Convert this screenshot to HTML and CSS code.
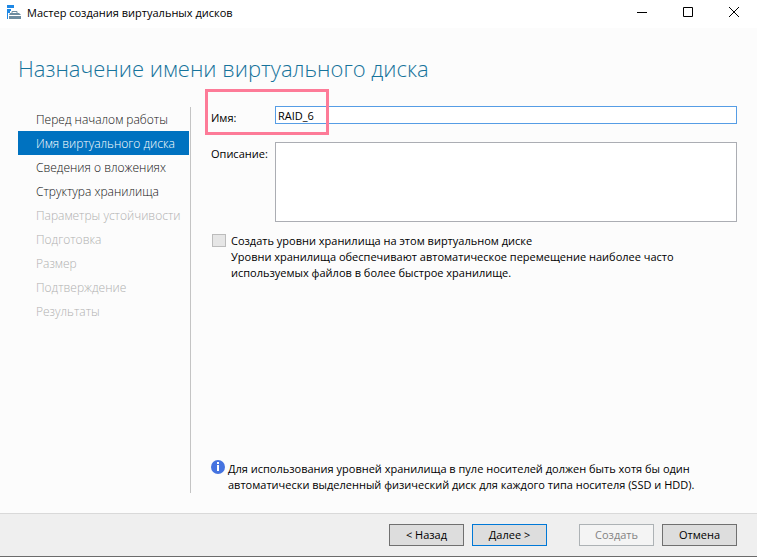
FILE: index.html
```
<!DOCTYPE html>
<html lang="ru">
<head>
    <meta charset="UTF-8">
    <title>Мастер создания виртуальных дисков</title>
    <link rel="stylesheet" href="styles.css">
</head>
<body>
    <div class="window">
        <header class="title-bar">
            <svg class="app-icon" width="14" height="14" viewBox="0 0 14 14">
                <path d="M0 0h7v3H0zM0 4h4v2H3v2H1v6H0z" fill="#1e88e5"/>
                <path d="M5 8V6.5h5V8" fill="none" stroke="#6d8ca0"/>
                <path d="M3 8h9l2 2H2zM2 11h12v3H2z" fill="#6d8ca0"/>
            </svg>
            <span class="title">Мастер создания виртуальных дисков</span>
            <div class="window-buttons">
                <button type="button" aria-label="Свернуть">
                    <svg width="10" height="10" viewBox="0 0 10 10"><path d="M0 5.5h10" stroke="#000"/></svg>
                </button>
                <button type="button" aria-label="Развернуть">
                    <svg width="10" height="10" viewBox="0 0 10 10"><path d="M.5.5h9v9h-9z" fill="none" stroke="#000"/></svg>
                </button>
                <button type="button" aria-label="Закрыть">
                    <svg width="10" height="10" viewBox="0 0 10 10"><path d="M0 0l10 10M10 0L0 10" stroke="#000"/></svg>
                </button>
            </div>
        </header>

        <h1>Назначение имени виртуального диска</h1>

        <div class="content">
            <nav class="steps">
                <a href="#">Перед началом работы</a>
                <a href="#" class="active">Имя виртуального диска</a>
                <a href="#">Сведения о вложениях</a>
                <a href="#">Структура хранилища</a>
                <a class="disabled">Параметры устойчивости</a>
                <a class="disabled">Подготовка</a>
                <a class="disabled">Размер</a>
                <a class="disabled">Подтверждение</a>
                <a class="disabled">Результаты</a>
            </nav>

            <form class="form" id="disk-form">
                <div class="field">
                    <label for="disk-name">Имя:</label>
                    <input type="text" id="disk-name" value="RAID_6" autocomplete="off">
                    <div class="highlight"></div>
                </div>
                <div class="field">
                    <label for="disk-description">Описание:</label>
                    <textarea id="disk-description"></textarea>
                </div>
                <div class="tiers">
                    <input type="checkbox" id="tiers" disabled>
                    <label for="tiers">Создать уровни хранилища на этом виртуальном диске<br>
                        Уровни хранилища обеспечивают автоматическое перемещение наиболее часто<br>
                        используемых файлов в более быстрое хранилище.</label>
                </div>
                <div class="info">
                    <svg width="14" height="14" viewBox="0 0 14 14">
                        <circle cx="7" cy="7" r="7" fill="#4573e0"/>
                        <path d="M6 2h2v2H6zM6 5h2v6H6z" fill="#fff"/>
                    </svg>
                    <p>Для использования уровней хранилища в пуле носителей должен быть хотя бы один<br>
                        автоматически выделенный физический диск для каждого типа носителя (SSD и HDD).</p>
                </div>
            </form>
        </div>

        <footer class="footer">
            <button type="button">&lt; Назад</button>
            <button type="submit" form="disk-form" class="default">Далее &gt;</button>
            <button type="button" class="create" disabled>Создать</button>
            <button type="button">Отмена</button>
        </footer>
    </div>
</body>
</html>
```
FILE: styles.css
```
* {
    box-sizing: border-box;
}
body {
    margin: 0;
    font-family: "Open Sans", "Noto Sans", sans-serif;
    font-size: 11px;
    line-height: 16px;
    color: #000;
}
.window {
    display: flex;
    flex-direction: column;
    min-height: 100vh;
    background: #fcfcfc;
    border-bottom: 1px solid #6b6b6b;
}

/* Title bar */
.title-bar {
    display: flex;
    align-items: center;
    height: 28px;
    padding: 0 0 4px 7px;
    background: #fff;
}
.title {
    margin-left: 6px;
    padding-top: 2px;
}
.window-buttons {
    display: flex;
    align-self: stretch;
    margin-left: auto;
}
.window-buttons button {
    display: flex;
    align-items: center;
    justify-content: center;
    width: 46px;
    padding: 0;
    border: none;
    background: none;
}

h1 {
    margin: 24px 18px 22px;
    font-size: 22px;
    font-weight: 300;
    line-height: 32px;
    color: #16739b;
}
.content {
    display: flex;
    flex: 1;
    padding: 0 20px 20px 18px;
}

/* Steps */
.steps {
    flex: none;
    width: 173px;
    margin-top: 1px;
    padding-right: 1px;
    border-right: 1px solid #c4c4c4;
}
.steps a {
    display: block;
    padding: 2px 0 0 18px;
    font-size: 12px;
    font-weight: 300;
    line-height: 22px;
    white-space: nowrap;
    color: #111;
    text-decoration: none;
}
.steps a.active {
    background: #0072c0;
    color: #fff;
}
.steps a.disabled {
    color: #b0b0b0;
}

/* Form */
.form {
    display: flex;
    flex-direction: column;
    flex: 1;
    padding-left: 20px;
}
.field {
    display: flex;
    align-items: flex-start;
    position: relative;
    margin-bottom: 16px;
}
.field label {
    flex: none;
    width: 64px;
    padding-top: 4px;
}
.field input,
.field textarea {
    flex: 1;
    min-width: 0;
    height: 18px;
    padding: 0 2px;
    border: 1px solid #569de5;
    border-radius: 0;
    outline: none;
    background: #fff;
    font: inherit;
}
.field textarea {
    height: 80px;
    border-color: #abadb3;
    resize: none;
}
.highlight {
    position: absolute;
    top: -17px;
    left: -6px;
    width: 124px;
    height: 46px;
    border: 3px solid #fd7b98;
    pointer-events: none;
}
.tiers {
    display: flex;
    margin-top: -5px;
}
.tiers input {
    appearance: none;
    flex: none;
    width: 14px;
    height: 13px;
    margin: 1px 5px 0 1px;
    border: 1px solid #bcbcbc;
    background: #e6e6e6;
}
.info {
    display: flex;
    margin-top: auto;
}
.info svg {
    flex: none;
    margin-right: 3px;
}
.info p {
    margin: 0;
    padding-top: 1px;
}

/* Footer */
.footer {
    display: flex;
    justify-content: flex-end;
    gap: 8px;
    padding: 10px 20px;
    border-top: 1px solid #d9d9d9;
    background: #efefef;
}
.footer button {
    width: 75px;
    height: 22px;
    padding: 0;
    border: 1px solid #707070;
    background: #ddd;
    color: #000;
    font: inherit;
}
.footer button.default {
    border-color: #0078d7;
}
.footer button.create {
    margin-left: 24px;
}
.footer button:disabled {
    border-color: #adb2b5;
    background: #f4f4f4;
    color: #838383;
}
```
